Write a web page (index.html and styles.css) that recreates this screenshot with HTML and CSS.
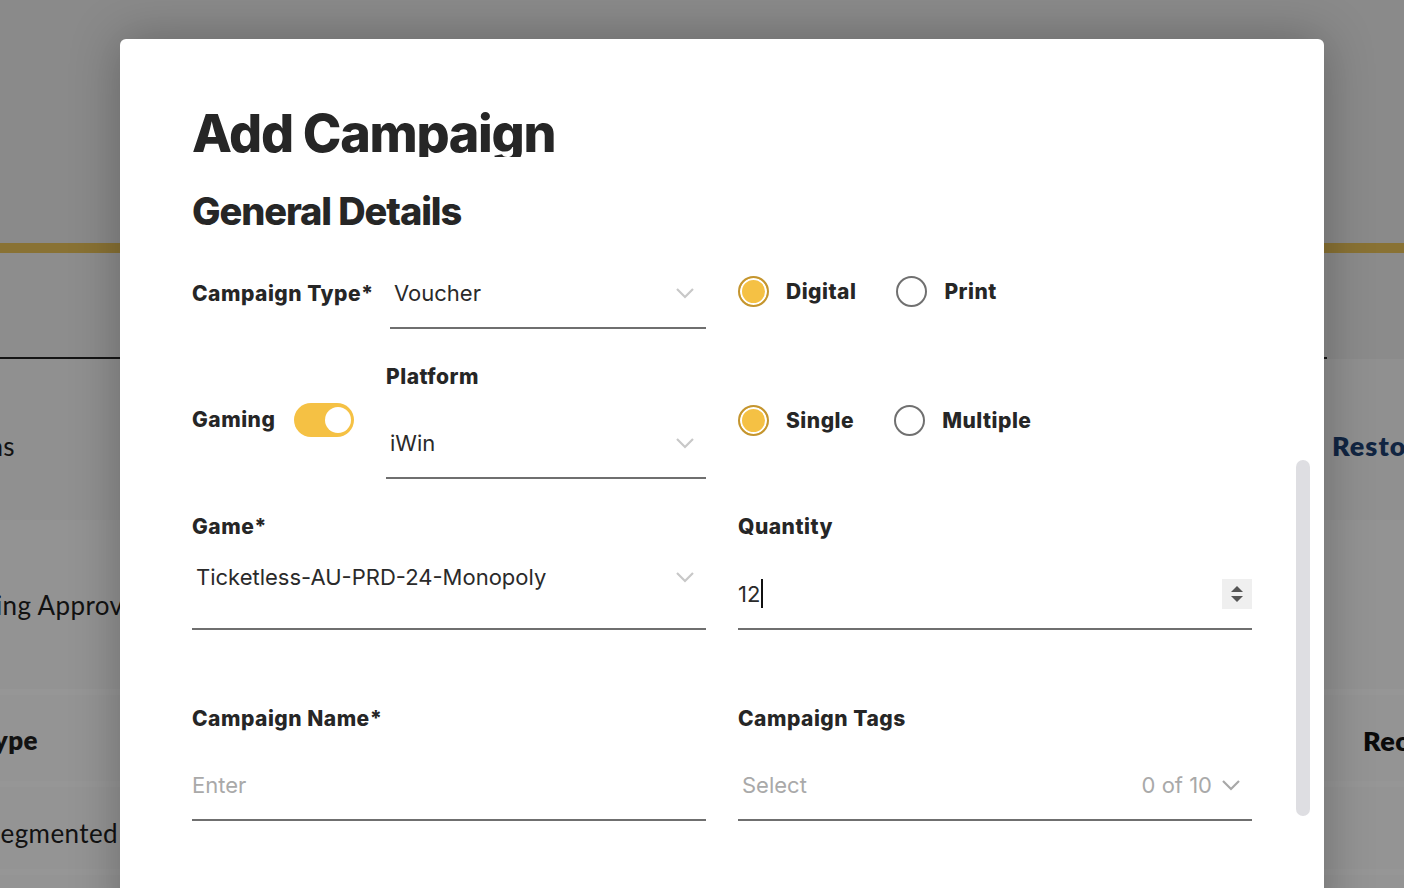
FILE: index.html
```html
<!DOCTYPE html>
<html>
<head>
<meta charset="utf-8">
<link rel="stylesheet" href="styles.css">
</head>
<body>
<div class="page">
  <div class="bg-header"></div>
  <div class="bg-gold"></div>
  <div class="bg-tabs"></div>
  <div class="bg-row bg-row-a">
    <div class="bg-left w15"><span>Campaigns</span></div>
    <div class="bg-right resto">Restore</div>
  </div>
  <div class="bg-row bg-row-b">
    <div class="bg-left w143"><span>Pending Approval</span></div>
  </div>
  <div class="bg-row bg-row-c">
    <div class="bg-left w38 bold"><span>Type</span></div>
    <div class="bg-right rec">Recipients</div>
  </div>
  <div class="bg-row bg-row-d">
    <div class="bg-left w118"><span>Segmented</span></div>
  </div>
  <div class="bg-row bg-row-e"></div>
</div>
<div class="overlay"></div>

<div class="modal">
  <h1 class="title">Add Campaign</h1>
  <h2 class="subtitle">General Details</h2>

  <div class="grid row1">
    <div class="inline">
      <span class="label">Campaign Type*</span>
      <div class="input select w316"><span class="value pad4">Voucher</span>
        <svg class="chev" width="20" height="12" viewBox="0 0 20 12"><path d="M2 2l8 8 8-8" fill="none" stroke="#c8c8c8" stroke-width="2.2"/></svg>
      </div>
    </div>
    <div class="radios">
      <label class="radio"><span class="dot on"></span><span class="rlabel">Digital</span></label>
      <label class="radio"><span class="dot"></span><span class="rlabel">Print</span></label>
    </div>
  </div>

  <div class="grid row2">
    <div class="inline">
      <div class="gaming">
        <span class="label">Gaming</span>
        <span class="toggle"><span class="knob"></span></span>
      </div>
      <div class="field w320">
        <span class="label">Platform</span>
        <div class="input select"><span class="value pad4">iWin</span>
          <svg class="chev" width="20" height="12" viewBox="0 0 20 12"><path d="M2 2l8 8 8-8" fill="none" stroke="#c8c8c8" stroke-width="2.2"/></svg>
        </div>
      </div>
    </div>
    <div class="radios r2">
      <label class="radio"><span class="dot on"></span><span class="rlabel">Single</span></label>
      <label class="radio"><span class="dot"></span><span class="rlabel">Multiple</span></label>
    </div>
  </div>

  <div class="grid row3">
    <div class="field">
      <span class="label">Game*</span>
      <div class="input select top"><span class="value pad4">Ticketless-AU-PRD-24-Monopoly</span>
        <svg class="chev" width="20" height="12" viewBox="0 0 20 12"><path d="M2 2l8 8 8-8" fill="none" stroke="#c8c8c8" stroke-width="2.2"/></svg>
      </div>
    </div>
    <div class="field">
      <span class="label">Quantity</span>
      <div class="input"><span class="value">12<span class="caret"></span></span>
        <span class="spin">
          <svg width="14" height="20" viewBox="0 0 14 20"><path d="M7 2l6 6H1z" fill="#555"/><path d="M1 12h12l-6 6z" fill="#555"/></svg>
        </span>
      </div>
    </div>
  </div>

  <div class="grid row4">
    <div class="field">
      <span class="label">Campaign Name*</span>
      <div class="input"><span class="value ph">Enter</span></div>
    </div>
    <div class="field">
      <span class="label">Campaign Tags</span>
      <div class="input"><span class="value ph pad4">Select</span>
        <span class="count">0 of 10
          <svg width="20" height="12" viewBox="0 0 20 12"><path d="M2 2l8 8 8-8" fill="none" stroke="#a8a8a8" stroke-width="2.2"/></svg>
        </span>
      </div>
    </div>
  </div>

  <div class="scrollbar"></div>
</div>
</body>
</html>
```
FILE: styles.css
```css
* { box-sizing: border-box; }
html, body { margin: 0; padding: 0; }
body {
  width: 1404px;
  height: 888px;
  overflow: hidden;
  position: relative;
  font-family: Inter, "Liberation Sans", sans-serif;
  background: #e8e8e8;
}
.page { display: flex; flex-direction: column; font-family: Lato, "Noto Sans", sans-serif; color: #1e1e1e; }
.bg-header { height: 243px; background: #e6e6e6; }
.bg-gold { height: 10px; background: #e4be57; }
.bg-tabs { height: 106px; background: #ebebeb; border-bottom: 2px solid #222; width: 1327px; }
.bg-row { display: flex; align-items: center; justify-content: space-between; font-size: 26px; letter-spacing: 0.4px; }
.bg-row-a { height: 161px; background: #f0f0f0; padding-top: 12px; }
.bg-row-b { height: 175px; background: #f6f6f6; border-bottom: 6px solid #fbfbfb; }
.bg-row-c { height: 92px; background: #f7f7f7; border-bottom: 6px solid #fbfbfb; padding-top: 4px; }
.bg-row-d { height: 88px; background: #f7f7f7; border-bottom: 6px solid #fbfbfb; padding-top: 10px; }
.bg-row-e { height: 40px; background: #f7f7f7; }
.bg-left { display: flex; justify-content: flex-end; white-space: nowrap; }
.bg-left.bold, .bg-right { font-weight: 800; }
.w15 { width: 15px; }
.w143 { width: 143px; }
.w38 { width: 38px; }
.w118 { width: 118px; }
.bg-right { width: 72px; white-space: nowrap; overflow: hidden; }
.resto { color: #1d3f6e; font-size: 27px; letter-spacing: 1px; }
.rec { width: 41px; color: #111; font-size: 27px; }

.overlay { position: absolute; inset: 0; background: rgba(0,0,0,0.4); }

.modal {
  position: absolute;
  left: 120px;
  top: 39px;
  width: 1204px;
  height: 900px;
  background: #fff;
  border-radius: 6px;
  box-shadow: 0 0 50px rgba(0,0,0,0.28);
  padding: 0 72px;
  color: #262626;
}
.title {
  margin: 65px 0 0;
  font-size: 52px;
  font-weight: 800;
  letter-spacing: -1.3px;
  line-height: 60px;
  height: 53px;
  overflow: hidden;
}
.subtitle {
  margin: 31px 0 0;
  font-size: 38px;
  font-weight: 800;
  letter-spacing: -1.1px;
  line-height: 46px;
}
.grid { display: grid; grid-template-columns: 514px 514px; column-gap: 32px; }
.row1 { margin-top: 24px; align-items: center; }
.row2 { margin-top: 36px; align-items: center; }
.row3 { margin-top: 36px; }
.row4 { margin-top: 77px; }

.inline { display: flex; align-items: center; justify-content: space-between; }
.label { font-size: 21px; font-weight: 800; line-height: 24px; letter-spacing: 0.5px; color: #262626; }
.field { display: flex; flex-direction: column; gap: 20px; }
.row2 .field { gap: 19px; }
.row4 .field { gap: 19px; }
.w316 { width: 316px; }
.w320 { width: 320px; }

.input {
  height: 71px;
  border-bottom: 2px solid #6f6f6f;
  display: flex;
  align-items: center;
  justify-content: space-between;
  position: relative;
}
.input.top { align-items: flex-start; padding-top: 6px; }
.input.top .chev { margin-top: 6px; }
.value { font-size: 22px; line-height: 24px; color: #2a2a2a; display: flex; align-items: center; }
.pad4 { padding-left: 4px; }
.ph { color: #a9a9a9; }
.chev { margin-right: 11px; }
.caret { display: inline-block; width: 2px; height: 29px; background: #111; margin-left: 1px; }
.spin {
  width: 30px; height: 30px; background: #efefef;
  display: flex; align-items: center; justify-content: center;
}
.count { display: flex; align-items: center; gap: 9px; color: #a9a9a9; font-size: 22px; margin-right: 11px; }

.radios { display: flex; align-items: center; gap: 40px; margin-top: -4px; }
.radio { display: flex; align-items: center; gap: 17px; }
.dot {
  width: 31px; height: 31px; border-radius: 50%;
  border: 2px solid #707070; background: #fff;
}
.dot.on { border-color: #c4952f; background: #f5c144; box-shadow: inset 0 0 0 2px #fff; }
.rlabel { font-size: 21px; font-weight: 800; letter-spacing: 0.5px; }
.r2 { margin-top: -4px; }

.gaming { display: flex; align-items: center; gap: 19px; margin-top: -4px; }
.toggle {
  width: 60px; height: 34px; border-radius: 17px; background: #f5c144;
  display: flex; align-items: center; justify-content: flex-end; padding-right: 3px;
}
.knob { width: 26px; height: 26px; border-radius: 50%; background: #fff; }

.scrollbar {
  position: absolute; left: 1176px; top: 421px;
  width: 14px; height: 356px; border-radius: 7px; background: #dedee2;
}
```
